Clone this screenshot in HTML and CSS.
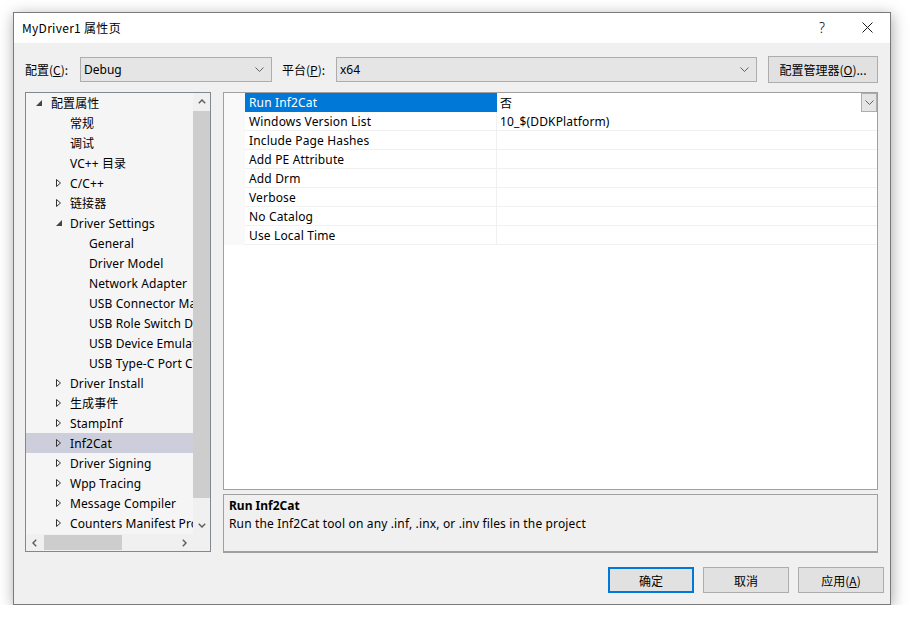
FILE: index.html
```html
<!DOCTYPE html>
<html lang="zh">
<head>
<meta charset="utf-8">
<title>MyDriver1 属性页</title>
<link rel="stylesheet" href="styles.css">
</head>
<body>
<div class="window">
  <div class="titlebar">
    <span class="title">MyDriver1 属性页</span>
    <div class="tb-btns">
      <span class="help">?</span>
      <svg class="close" width="11" height="11" viewBox="0 0 11 11"><path d="M0.5 0.5 L10.5 10.5 M10.5 0.5 L0.5 10.5" stroke="#1a1a1a" stroke-width="1" fill="none"/></svg>
    </div>
  </div>
  <div class="body">
    <div class="config-row">
      <span class="lbl lbl-config">配置(<u>C</u>):</span>
      <div class="combo combo-config"><span>Debug</span><svg class="chev" width="9" height="5" viewBox="0 0 9 5"><polyline points="0.5,0.5 4.5,4.5 8.5,0.5" stroke="#606060" fill="none"/></svg></div>
      <span class="lbl lbl-plat">平台(<u>P</u>):</span>
      <div class="combo combo-plat"><span>x64</span><svg class="chev" width="9" height="5" viewBox="0 0 9 5"><polyline points="0.5,0.5 4.5,4.5 8.5,0.5" stroke="#606060" fill="none"/></svg></div>
      <button class="btn btn-mgr">配置管理器(<u>O</u>)...</button>
    </div>
    <div class="main">
      <div class="tree">
        <div class="tree-list">
          <div class="row l0"><span class="tg"><svg width="6" height="6" viewBox="0 0 6 6"><polygon points="6,0 6,6 0,6" fill="#444"/></svg></span><span class="tx">配置属性</span></div>
          <div class="row l1"><span class="tg"></span><span class="tx">常规</span></div>
          <div class="row l1"><span class="tg"></span><span class="tx">调试</span></div>
          <div class="row l1"><span class="tg"></span><span class="tx">VC++ 目录</span></div>
          <div class="row l1"><span class="tg"><svg width="5" height="8" viewBox="0 0 5 8"><polygon points="0.5,0.5 4.5,4 0.5,7.5" fill="none" stroke="#333"/></svg></span><span class="tx">C/C++</span></div>
          <div class="row l1"><span class="tg"><svg width="5" height="8" viewBox="0 0 5 8"><polygon points="0.5,0.5 4.5,4 0.5,7.5" fill="none" stroke="#333"/></svg></span><span class="tx">链接器</span></div>
          <div class="row l1"><span class="tg"><svg width="6" height="6" viewBox="0 0 6 6"><polygon points="6,0 6,6 0,6" fill="#444"/></svg></span><span class="tx">Driver Settings</span></div>
          <div class="row l2"><span class="tg"></span><span class="tx">General</span></div>
          <div class="row l2"><span class="tg"></span><span class="tx">Driver Model</span></div>
          <div class="row l2"><span class="tg"></span><span class="tx">Network Adapter</span></div>
          <div class="row l2"><span class="tg"></span><span class="tx">USB Connector Manager</span></div>
          <div class="row l2"><span class="tg"></span><span class="tx">USB Role Switch Driver</span></div>
          <div class="row l2"><span class="tg"></span><span class="tx">USB Device Emulation</span></div>
          <div class="row l2"><span class="tg"></span><span class="tx">USB Type-C Port Controller</span></div>
          <div class="row l1"><span class="tg"><svg width="5" height="8" viewBox="0 0 5 8"><polygon points="0.5,0.5 4.5,4 0.5,7.5" fill="none" stroke="#333"/></svg></span><span class="tx">Driver Install</span></div>
          <div class="row l1"><span class="tg"><svg width="5" height="8" viewBox="0 0 5 8"><polygon points="0.5,0.5 4.5,4 0.5,7.5" fill="none" stroke="#333"/></svg></span><span class="tx">生成事件</span></div>
          <div class="row l1"><span class="tg"><svg width="5" height="8" viewBox="0 0 5 8"><polygon points="0.5,0.5 4.5,4 0.5,7.5" fill="none" stroke="#333"/></svg></span><span class="tx">StampInf</span></div>
          <div class="row l1 sel"><span class="tg"><svg width="5" height="8" viewBox="0 0 5 8"><polygon points="0.5,0.5 4.5,4 0.5,7.5" fill="none" stroke="#333"/></svg></span><span class="tx">Inf2Cat</span></div>
          <div class="row l1"><span class="tg"><svg width="5" height="8" viewBox="0 0 5 8"><polygon points="0.5,0.5 4.5,4 0.5,7.5" fill="none" stroke="#333"/></svg></span><span class="tx">Driver Signing</span></div>
          <div class="row l1"><span class="tg"><svg width="5" height="8" viewBox="0 0 5 8"><polygon points="0.5,0.5 4.5,4 0.5,7.5" fill="none" stroke="#333"/></svg></span><span class="tx">Wpp Tracing</span></div>
          <div class="row l1"><span class="tg"><svg width="5" height="8" viewBox="0 0 5 8"><polygon points="0.5,0.5 4.5,4 0.5,7.5" fill="none" stroke="#333"/></svg></span><span class="tx">Message Compiler</span></div>
          <div class="row l1"><span class="tg"><svg width="5" height="8" viewBox="0 0 5 8"><polygon points="0.5,0.5 4.5,4 0.5,7.5" fill="none" stroke="#333"/></svg></span><span class="tx">Counters Manifest Processor</span></div>
        </div>
        <div class="vscroll">
          <div class="sb-btn"><svg width="8" height="5" viewBox="0 0 8 5"><polyline points="0.8,4.2 4,1 7.2,4.2" stroke="#606060" stroke-width="1.5" fill="none"/></svg></div>
          <div class="vtrack"><div class="vthumb"></div></div>
          <div class="sb-btn"><svg width="8" height="5" viewBox="0 0 8 5"><polyline points="0.8,0.8 4,4 7.2,0.8" stroke="#606060" stroke-width="1.5" fill="none"/></svg></div>
        </div>
        <div class="hscroll">
          <div class="sb-btn"><svg width="5" height="8" viewBox="0 0 5 8"><polyline points="4.2,0.8 1,4 4.2,7.2" stroke="#606060" stroke-width="1.5" fill="none"/></svg></div>
          <div class="htrack"><div class="hthumb"></div></div>
          <div class="sb-btn"><svg width="5" height="8" viewBox="0 0 5 8"><polyline points="0.8,0.8 4,4 0.8,7.2" stroke="#606060" stroke-width="1.5" fill="none"/></svg></div>
        </div>
        <div class="corner"></div>
      </div>
      <div class="right">
        <div class="grid">
          <div class="prow sel"><div class="gut"></div><div class="pname">Run Inf2Cat</div><div class="pval"><span>否</span><div class="ddbtn"><svg width="9" height="5" viewBox="0 0 9 5"><polyline points="0.5,0.5 4.5,4.5 8.5,0.5" stroke="#606060" fill="none"/></svg></div></div></div>
          <div class="prow"><div class="gut"></div><div class="pname">Windows Version List</div><div class="pval"><span>10_$(DDKPlatform)</span></div></div>
          <div class="prow"><div class="gut"></div><div class="pname">Include Page Hashes</div><div class="pval"></div></div>
          <div class="prow"><div class="gut"></div><div class="pname">Add PE Attribute</div><div class="pval"></div></div>
          <div class="prow"><div class="gut"></div><div class="pname">Add Drm</div><div class="pval"></div></div>
          <div class="prow"><div class="gut"></div><div class="pname">Verbose</div><div class="pval"></div></div>
          <div class="prow"><div class="gut"></div><div class="pname">No Catalog</div><div class="pval"></div></div>
          <div class="prow"><div class="gut"></div><div class="pname">Use Local Time</div><div class="pval"></div></div>
        </div>
        <div class="desc">
          <div class="desc-title">Run Inf2Cat</div>
          <div class="desc-text">Run the Inf2Cat tool on any .inf, .inx, or .inv files in the project</div>
        </div>
      </div>
    </div>
    <div class="footer">
      <button class="btn btn-dlg btn-default">确定</button>
      <button class="btn btn-dlg">取消</button>
      <button class="btn btn-dlg">应用(<u>A</u>)</button>
    </div>
  </div>
</div>
</body>
</html>
```

FILE: styles.css
```css
* { box-sizing: border-box; }
html, body { margin: 0; padding: 0; background: #ffffff; }
body {
  font-family: "Noto Sans", "Noto Sans CJK SC", sans-serif;
  font-size: 12px;
  color: #000;
  padding: 12px 0 0 13px;
}
.window {
  width: 878px;
  height: 593px;
  border: 1px solid #7a7a7a;
  background: #f0f0f0;
  box-shadow: 1px 3px 14px rgba(0,0,0,0.35);
  display: flex;
  flex-direction: column;
}
.titlebar {
  height: 30px;
  background: #fff;
  display: flex;
  align-items: center;
  justify-content: space-between;
  padding-left: 8px;
  padding-bottom: 2px;
  flex: none;
}
.title { font-family: "Noto Sans CJK SC", sans-serif; font-size: 12px; letter-spacing: 0.3px; }
.tb-btns { display: flex; align-items: center; height: 100%; }
.help { font-family: "Noto Sans", sans-serif; font-size: 14px; font-weight: 300; width: 46px; text-align: center; }
.close { margin: 0 17px; }
.body {
  flex: 1;
  padding: 13px 11px 0 11px;
  display: flex;
  flex-direction: column;
}
.config-row { display: flex; align-items: center; height: 27px; }
.lbl { font-family: "Noto Sans CJK SC", sans-serif; white-space: nowrap; }
.lbl-config { width: 55px; }
.lbl-plat { width: 54px; margin-left: 10px; }
.combo {
  height: 25px;
  background: #e5e5e5;
  border: 1px solid #adadad;
  display: flex;
  align-items: center;
  justify-content: space-between;
  padding: 0 7px 0 3px;
}
.combo-config { width: 192px; }
.combo-plat { width: 421px; }
.btn {
  font-family: "Noto Sans CJK SC", sans-serif;
  font-size: 12px;
  background: #e1e1e1;
  border: 1px solid #adadad;
  color: #000;
  padding: 0;
}
.btn-mgr { width: 110px; height: 27px; margin-left: 11px; }
.main { display: flex; margin-top: 9px; }
.tree {
  width: 186px;
  height: 460px;
  border: 1px solid #828790;
  background: #f5f5f5;
  display: grid;
  grid-template-columns: 1fr 17px;
  grid-template-rows: 1fr 17px;
}
.tree-list { overflow: hidden; }
.row { height: 20px; display: flex; align-items: center; white-space: nowrap; }
.row.l0 { padding-left: 7px; }
.row.l1 { padding-left: 26px; }
.row.l2 { padding-left: 45px; }
.row.sel { background: #cccedb; }
.tg { width: 18px; flex: none; display: flex; align-items: center; padding-left: 4px; }
.tg svg { display: block; }
.row.l0 .tg { padding-left: 3px; }
.tx { white-space: nowrap; letter-spacing: 0.1px; }
.vscroll { display: flex; flex-direction: column; background: #f0f0f0; }
.sb-btn { width: 17px; height: 17px; flex: none; display: flex; align-items: center; justify-content: center; }
.vtrack { flex: 1; padding: 1px 0 18px 0; }
.vthumb { height: 387px; background: #cdcdcd; }
.hscroll { display: flex; background: #f0f0f0; }
.hscroll .sb-btn { width: 17px; }
.htrack { flex: 1; display: flex; align-items: stretch; padding: 1px 0; }
.hthumb { width: 78px; margin-left: 1px; background: #cdcdcd; }
.corner { background: #f0f0f0; }
.right { margin-left: 12px; width: 655px; display: flex; flex-direction: column; }
.grid {
  height: 398px;
  border: 1px solid #a0a0a0;
  background: #fff;
}
.prow { display: flex; height: 19px; }
.gut { width: 21px; flex: none; background: #f9f9f9; }
.pname {
  width: 252px;
  flex: none;
  padding: 1px 0 0 4px;
  border-bottom: 1px solid #f0f0f0;
  border-right: 1px solid #f0f0f0;
  display: flex;
  align-items: center;
  white-space: nowrap;
  letter-spacing: 0.15px;
}
.pval {
  flex: 1;
  border-bottom: 1px solid #f0f0f0;
  display: flex;
  align-items: center;
  justify-content: space-between;
  padding: 1px 0 0 3px;
  letter-spacing: 0.15px;
}
.prow.sel .pname { background: #0078d7; color: #fff; border-color: #0078d7; }
.prow.sel .pval { border-bottom: none; padding-top: 0; }
.prow.sel .pval span { padding-top: 1px; }
.ddbtn {
  width: 16px;
  height: 19px;
  background: #e5e5e5;
  border: 1px solid #adadad;
  display: flex;
  align-items: center;
  justify-content: center;
}
.desc {
  margin-top: 4px;
  height: 59px;
  border: 1px solid #a0a0a0;
  border-bottom: 2px solid #a0a0a0;
  padding: 2px 5px 0 5px;
  line-height: 18px;
}
.desc-title { font-weight: bold; }
.desc-text { letter-spacing: 0.15px; }
.footer {
  display: flex;
  justify-content: flex-end;
  gap: 9px;
  margin-top: 14px;
  margin-right: -5px;
}
.btn-dlg { width: 86px; height: 26px; }
.btn-default { border: 2px solid #0078d7; }
```
